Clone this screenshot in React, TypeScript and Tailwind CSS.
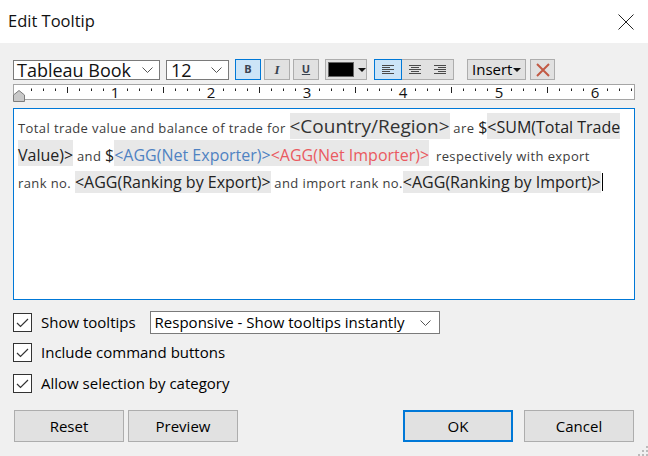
import React from "react";

function Chevron({ className }: { className?: string }) {
    return (
        <svg width="11" height="6" viewBox="0 0 11 6" className={className}>
            <polyline points="0.5,0.5 5.5,5.5 10.5,0.5" fill="none" stroke="#555" strokeWidth="1" />
        </svg>
    );
}

function Caret() {
    return (
        <svg width="8" height="4" viewBox="0 0 8 4">
            <polygon points="0,0 8,0 4,4" fill="#111" />
        </svg>
    );
}

function AlignIcon({ kind }: { kind: "left" | "center" | "right" }) {
    const rows = [12, 8, 12, 8, 12];
    return (
        <svg width="12" height="9" viewBox="0 0 12 9">
            {rows.map((w, i) => {
                const x = kind === "left" ? 0 : kind === "center" ? (12 - w) / 2 : 12 - w;
                return <rect key={i} x={x} y={i * 2} width={w} height="1" fill="#4a4a4a" />;
            })}
        </svg>
    );
}

function Ruler() {
    const ticks = [];
    for (let k = 1; k < 52; k++) {
        if (k % 8 === 0) continue;
        const x = 5 + k * 12 + 0.5;
        const long = k % 4 === 0;
        ticks.push(<line key={k} x1={x} x2={x} y1={long ? 2 : 3.5} y2={long ? 8 : 6} stroke="#222" strokeWidth="1" />);
    }
    const nums = [1, 2, 3, 4, 5, 6];
    return (
        <div className="relative mt-[4px] h-[16px] border border-[#a5a5a5] bg-white">
            <svg width="620" height="14" viewBox="0 0 620 14" className="block overflow-visible">
                {ticks}
                {nums.map((n) => (
                    <text key={n} x={5 + n * 96} y="13" textAnchor="middle" fontSize="15" fill="#111" fontFamily="'Open Sans', sans-serif">
                        {n}
                    </text>
                ))}
            </svg>
            <svg width="12" height="12" viewBox="0 0 12 12" className="absolute left-[-1px] top-[5px]">
                <polygon points="6,0.5 11.5,5 11.5,11.5 0.5,11.5 0.5,5" fill="#c9c9c9" stroke="#7c7c7c" strokeWidth="1" />
            </svg>
        </div>
    );
}

function CheckRow({ label, children, className }: { label: string; children?: React.ReactNode; className?: string }) {
    return (
        <div className={`flex h-[23px] items-center ${className ?? ""}`}>
            <div className="flex h-[19px] w-[19px] items-center justify-center border border-[#333] bg-white">
                <svg width="13" height="10" viewBox="0 0 13 10">
                    <polyline points="1,5 4.5,8.5 12,1" fill="none" stroke="#333" strokeWidth="1.2" />
                </svg>
            </div>
            <span className="ml-[9px] text-[15px] text-black">{label}</span>
            {children}
        </div>
    );
}

function Btn({ label, primary }: { label: string; primary?: boolean }) {
    return (
        <button
            className={`flex h-[32px] w-[110px] items-center justify-center bg-[#e1e1e1] text-[15px] text-black ${
                primary ? "border-2 border-[#0078d7]" : "border border-[#adadad]"
            }`}
        >
            {label}
        </button>
    );
}

function App() {
    const tok = "bg-[#e8e8e8] tracking-normal";
    return (
        <div className="relative flex h-[456px] w-[648px] flex-col bg-[#f0f0f0] font-['Open_Sans',sans-serif] text-black">
            <div className="flex h-[43px] items-center justify-between bg-white pl-[8px] pr-[14px]">
                <span className="text-[16.5px] text-[#111]">Edit Tooltip</span>
                <svg width="16" height="16" viewBox="0 0 16 16">
                    <path d="M0.5 0.5 L15.5 15.5 M15.5 0.5 L0.5 15.5" stroke="#222" strokeWidth="1" />
                </svg>
            </div>

            <div className="flex flex-col px-[13px] pt-[16px]">
                {/* toolbar */}
                <div className="flex h-[21px] items-center">
                    <div className="flex h-[20px] w-[147px] items-center justify-between border border-[#7a7a7a] bg-white pl-[3px] pr-[6px]">
                        <span className="text-[18px] leading-none text-[#111]">Tableau Book</span>
                        <Chevron />
                    </div>
                    <div className="ml-[6px] flex h-[20px] w-[63px] items-center justify-between border border-[#7a7a7a] bg-white pl-[4px] pr-[6px]">
                        <span className="text-[18px] leading-none text-[#111]">12</span>
                        <Chevron />
                    </div>
                    <div className="ml-[6px] flex h-[21px] w-[26px] items-center justify-center border border-[#0078d7] bg-[#cce4f7] text-[11px] font-bold text-[#3a4350]">B</div>
                    <div className="ml-[3px] flex h-[21px] w-[26px] items-center justify-center border border-[#adadad] bg-[#e1e1e1] font-['Liberation_Serif',serif] text-[13px] font-bold italic text-[#3a4350]">I</div>
                    <div className="ml-[3px] flex h-[21px] w-[26px] items-center justify-center border border-[#adadad] bg-[#e1e1e1] text-[11px] font-bold text-[#3a4350] underline">U</div>
                    <div className="ml-[6px] flex h-[21px] w-[42px] items-center border border-[#adadad] bg-[#e1e1e1] pl-[2px]">
                        <div className="h-[15px] w-[27px] border border-[#666] bg-black" />
                        <div className="ml-[4px]">
                            <Caret />
                        </div>
                    </div>
                    <div className="ml-[7px] flex h-[21px] w-[80px] border border-[#adadad] bg-[#e1e1e1]">
                        <div className="my-[-1px] ml-[-1px] flex w-[28px] items-center justify-center border border-[#0078d7] bg-[#cce4f7]">
                            <AlignIcon kind="left" />
                        </div>
                        <div className="flex w-[26px] items-center justify-center">
                            <AlignIcon kind="center" />
                        </div>
                        <div className="flex w-[26px] items-center justify-center">
                            <AlignIcon kind="right" />
                        </div>
                    </div>
                    <div className="ml-[13px] flex h-[21px] w-[59px] items-center border border-[#adadad] bg-[#e1e1e1] pl-[4px]">
                        <span className="text-[15px] leading-none">Insert</span>
                        <div className="ml-[1px]">
                            <Caret />
                        </div>
                    </div>
                    <div className="ml-[4px] flex h-[21px] w-[25px] items-center justify-center border border-[#adadad] bg-[#e1e1e1]">
                        <svg width="14" height="14" viewBox="0 0 14 14">
                            <path d="M1 1 L13 13 M13 1 L1 13" stroke="#c25a45" strokeWidth="2" />
                        </svg>
                    </div>
                </div>

                <Ruler />

                {/* editor */}
                <div className="mt-[8px] h-[192px] border border-[#0078d7] bg-white pl-[4px] whitespace-nowrap text-[13px] leading-none tracking-[0.4px] text-[#3c3c3c]">
                    <div className="pt-[8px]">
                        Total trade value and balance of trade for{" "}
                        <span className={`${tok} text-[19px] text-[#333]`}>&lt;Country/Region&gt;</span> are{" "}
                        <span className="text-[16px] tracking-normal text-[#222]">$</span>
                        <span className={`${tok} pt-[3px] pb-[1px] text-[16px] text-[#222]`}>&lt;SUM(Total Trade</span>
                    </div>
                    <div className="pt-[11px]">
                        <span className={`${tok} pt-[4px] text-[16px] text-[#222]`}>Value)&gt;</span> and{" "}
                        <span className="text-[16px] tracking-normal text-[#222]">$</span>
                        <span className={`${tok} pt-[4px] text-[16px] text-[#4f82c2]`}>&lt;AGG(Net Exporter)&gt;</span>
                        <span className={`${tok} pt-[4px] text-[16px] text-[#ea5a60]`}>&lt;AGG(Net Importer)&gt;</span>
                        {"  "}
                        <span className="ml-[3px]">respectively with export</span>
                    </div>
                    <div className="pt-[10px]">
                        rank no.{" "}
                        <span className={`${tok} text-[16px] text-[#222]`}>&lt;AGG(Ranking by Export)&gt;</span> and import rank no.
                        <span className={`${tok} text-[16px] text-[#222]`}>&lt;AGG(Ranking by Import)&gt;</span>
                        <span className="ml-[1px] inline-block h-[18px] w-[1px] bg-black align-[-3px]" />
                    </div>
                </div>

                <CheckRow label="Show tooltips" className="mt-[11px]">
                    <div className="ml-[14px] flex h-[23px] w-[290px] items-center justify-between border border-[#7a7a7a] bg-white pl-[4px] pr-[8px]">
                        <span className="text-[15px]">Responsive - Show tooltips instantly</span>
                        <Chevron />
                    </div>
                </CheckRow>
                <CheckRow label="Include command buttons" className="mt-[7px]" />
                <CheckRow label="Allow selection by category" className="mt-[8px]" />

                <div className="mt-[15px] flex pl-[1px] pr-[1px]">
                    <Btn label="Reset" />
                    <div className="ml-[4px]">
                        <Btn label="Preview" />
                    </div>
                    <div className="ml-auto">
                        <Btn label="OK" primary />
                    </div>
                    <div className="ml-[11px]">
                        <Btn label="Cancel" />
                    </div>
                </div>
            </div>

            <svg width="10" height="10" viewBox="0 0 10 10" className="absolute bottom-0 right-0">
                <rect x="8" y="0" width="2" height="2" fill="#bbb" />
                <rect x="8" y="4" width="2" height="2" fill="#bbb" />
                <rect x="4" y="4" width="2" height="2" fill="#bbb" />
                <rect x="8" y="8" width="2" height="2" fill="#bbb" />
                <rect x="4" y="8" width="2" height="2" fill="#bbb" />
                <rect x="0" y="8" width="2" height="2" fill="#bbb" />
            </svg>
        </div>
    );
}

export default App;
